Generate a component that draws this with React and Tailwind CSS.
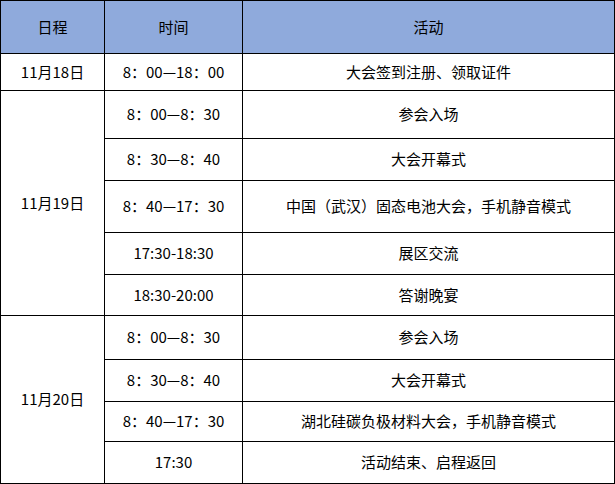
const day19 = [
  ["8：00—8：30", "参会入场"],
  ["8：30—8：40", "大会开幕式"],
  ["8：40—17：30", "中国（武汉）固态电池大会，手机静音模式"],
  ["17:30-18:30", "展区交流"],
  ["18:30-20:00", "答谢晚宴"],
];

const day20 = [
  ["8：00—8：30", "参会入场"],
  ["8：30—8：40", "大会开幕式"],
  ["8：40—17：30", "湖北硅碳负极材料大会，手机静音模式"],
  ["17:30", "活动结束、启程返回"],
];

const Cell = ({ children, className = "bg-white" }) => (
  <div className={`flex items-center justify-center ${className}`}>{children}</div>
);

export default function App() {
  return (
    <div
      className="w-[615px] h-[484px] bg-white text-[15px] text-black"
      style={{ fontFamily: '"Noto Sans CJK SC", "Noto Sans", sans-serif' }}
    >
      <div className="grid grid-cols-[103px_137px_371px] grid-rows-[52px_36px_47px_41px_51px_41px_40px_43px_41px_39px_41px] gap-px p-px bg-black">
        {/* 表头 */}
        <Cell className="bg-[#8faadc]">日程</Cell>
        <Cell className="bg-[#8faadc]">时间</Cell>
        <Cell className="bg-[#8faadc]">活动</Cell>

        {/* 11月18日 */}
        <Cell>11月18日</Cell>
        <Cell>8：00—18：00</Cell>
        <Cell>大会签到注册、领取证件</Cell>

        {/* 11月19日 */}
        <Cell className="bg-white row-span-5">11月19日</Cell>
        {day19.map(([time, act]) => (
          <div key={time + act} className="contents">
            <Cell>{time}</Cell>
            <Cell>{act}</Cell>
          </div>
        ))}

        {/* 11月20日 */}
        <Cell className="bg-white row-span-4">11月20日</Cell>
        {day20.map(([time, act]) => (
          <div key={time + act} className="contents">
            <Cell>{time}</Cell>
            <Cell>{act}</Cell>
          </div>
        ))}
      </div>
    </div>
  );
}
